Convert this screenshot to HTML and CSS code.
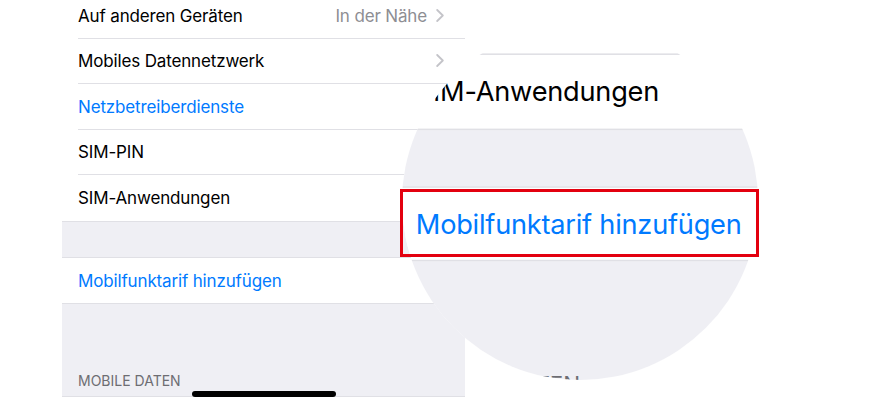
FILE: index.html
```html
<!DOCTYPE html>
<html>
<head>
    <title>Mobilfunk</title>
    <link rel="stylesheet" href="styles.css">
</head>
<body>
    <div class="stage">
        <div class="screen">
            <div class="group">
                <div class="row">
                    <div class="row-inner">
                        <span class="label">Auf anderen Geräten</span>
                        <span class="value">In der Nähe</span>
                        <svg class="chevron" width="8" height="13" viewBox="0 0 8 13"><polyline points="1.2,1 6.8,6.5 1.2,12"/></svg>
                    </div>
                </div>
                <div class="row">
                    <div class="row-inner">
                        <span class="label">Mobiles Datennetzwerk</span>
                        <svg class="chevron" width="8" height="13" viewBox="0 0 8 13"><polyline points="1.2,1 6.8,6.5 1.2,12"/></svg>
                    </div>
                </div>
                <div class="row">
                    <div class="row-inner">
                        <span class="label link">Netzbetreiberdienste</span>
                    </div>
                </div>
                <div class="row">
                    <div class="row-inner">
                        <span class="label">SIM-PIN</span>
                    </div>
                </div>
                <div class="row">
                    <div class="row-inner last">
                        <span class="label">SIM-Anwendungen</span>
                    </div>
                </div>
            </div>

            <div class="spacer"></div>

            <div class="group">
                <div class="row">
                    <div class="row-inner last">
                        <span class="label link">Mobilfunktarif hinzufügen</span>
                    </div>
                </div>
            </div>

            <div class="section-header">MOBILE DATEN</div>

            <div class="group">
                <div class="row">
                    <div class="row-inner last"></div>
                </div>
            </div>
        </div>

        <div class="lens" aria-hidden="true">
            <div class="lens-content"></div>
        </div>
        <div class="highlight"></div>
        <div class="home-bar"></div>
    </div>

    <script>
        // magnifier shows a scaled copy of the list
        const screen = document.querySelector('.screen');
        document.querySelector('.lens-content').appendChild(screen.cloneNode(true));
    </script>
</body>
</html>
```

FILE: styles.css
```css
body {
    margin: 0;
    background: #fff;
    font-family: Inter, "Liberation Sans", sans-serif;
}
.stage {
    position: relative;
    width: 879px;
    height: 400px;
    overflow: hidden;
    background: #fff;
}
.screen {
    margin: -7px 0 0 62px;
    width: 403px;
    background: #efeff4;
}
.group {
    background: #fff;
    border-top: 1px solid #e0e0e5;
    border-bottom: 1px solid #e0e0e5;
}
.group:first-child {
    border-top: none;
}
.row {
    height: 45.5px;
    padding-left: 16px;
    display: flex;
}
.row-inner {
    flex: 1;
    display: flex;
    align-items: center;
    padding-right: 21px;
    border-bottom: 1px solid #e0e0e5;
    font-size: 17px;
    letter-spacing: -0.15px;
    color: #000;
}
.row-inner.last {
    border-bottom: none;
}
.label {
    flex: 1;
    padding-top: 1px;
}
.link {
    color: #007aff;
}
.value {
    color: #8e8e93;
    margin-right: 9px;
    padding-top: 1px;
}
.chevron polyline {
    fill: none;
    stroke: #c4c4c9;
    stroke-width: 1.8;
    stroke-linecap: round;
    stroke-linejoin: round;
}
.spacer {
    height: 35px;
}
.section-header {
    height: 92px;
    box-sizing: border-box;
    padding: 0 16px 7px;
    display: flex;
    align-items: flex-end;
    font-size: 14px;
    color: #6d6d72;
}
.lens {
    position: absolute;
    left: 402px;
    top: 24px;
    width: 356px;
    height: 356px;
    border-radius: 50%;
    overflow: hidden;
    background: #fff;
}
.lens-content {
    position: absolute;
    left: -110.8px;
    top: -249px;
    width: 879px;
    transform: scale(1.6);
    transform-origin: 0 0;
}
.highlight {
    position: absolute;
    left: 400px;
    top: 189px;
    width: 359px;
    height: 68px;
    box-sizing: border-box;
    border: 3px solid #e3000f;
}
.home-bar {
    position: absolute;
    left: 192px;
    top: 391px;
    width: 144px;
    height: 6px;
    border-radius: 3px;
    background: #000;
}
```
